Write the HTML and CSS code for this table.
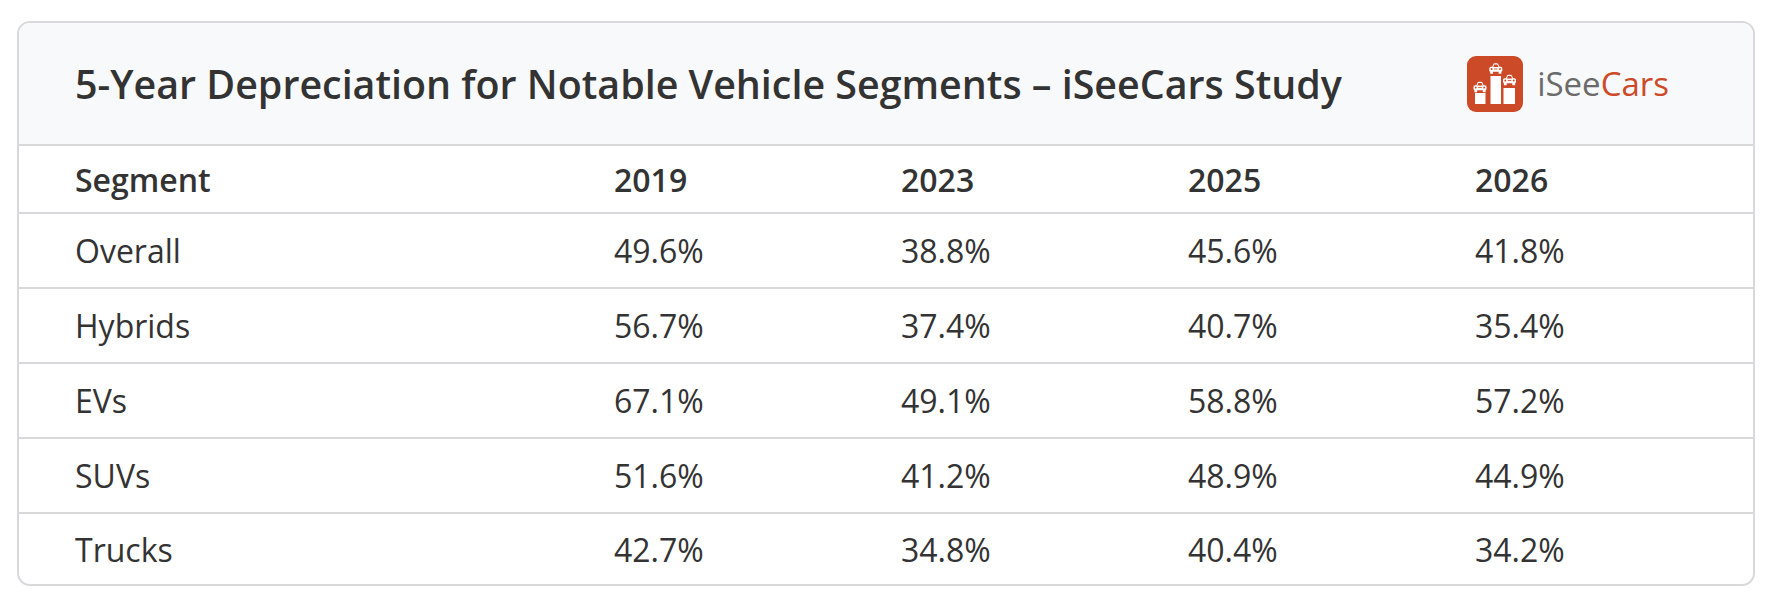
FILE: index.html
```html
<!DOCTYPE html>
<html lang="en">
<head>
<meta charset="utf-8">
<title>5-Year Depreciation – iSeeCars Study</title>
<link rel="stylesheet" href="styles.css">
</head>
<body>
<div class="card">
  <div class="card-header">
    <h1 class="title">5-Year Depreciation for Notable Vehicle Segments – iSeeCars Study</h1>
    <div class="logo">
      <svg class="logo-icon" viewBox="0 0 56 56" width="56" height="56" aria-hidden="true">
        <defs>
          <g id="car">
            <path d="M3.2 4.2 L4.6 1 Q5 0.2 6 0.2 H8 Q9 0.2 9.4 1 L10.8 4.2 Z" fill="#fff"/>
            <rect x="0.5" y="3.8" width="13" height="5" rx="1.6" fill="#fff"/>
            <rect x="1.4" y="8" width="2.8" height="2.8" rx="0.6" fill="#fff"/>
            <rect x="9.8" y="8" width="2.8" height="2.8" rx="0.6" fill="#fff"/>
            <path d="M4.4 3.9 L5.4 1.6 H8.6 L9.6 3.9 Z" fill="#cd4a28"/>
            <circle cx="2.8" cy="6" r="0.95" fill="#cd4a28"/>
            <circle cx="11.2" cy="6" r="0.95" fill="#cd4a28"/>
            <rect x="5.2" y="5.6" width="3.6" height="0.8" fill="#cd4a28"/>
          </g>
        </defs>
        <rect x="0" y="0" width="56" height="56" rx="9" fill="#cd4a28"/>
        <rect x="8" y="37" width="10.5" height="11" fill="#fff"/>
        <rect x="23.5" y="20" width="10.5" height="28" fill="#fff"/>
        <rect x="36.5" y="32" width="11.5" height="16" fill="#fff"/>
        <use href="#car" transform="translate(6 25.5)"/>
        <use href="#car" transform="translate(21.8 7)"/>
        <use href="#car" transform="translate(35.5 18.5)"/>
      </svg>
      <span class="logo-text"><span class="logo-see">iSee</span><span class="logo-cars">Cars</span></span>
    </div>
  </div>
  <table class="data">
    <colgroup>
      <col class="c-seg">
      <col class="c-year">
      <col class="c-year">
      <col class="c-year">
      <col>
    </colgroup>
    <thead>
      <tr><th>Segment</th><th>2019</th><th>2023</th><th>2025</th><th>2026</th></tr>
    </thead>
    <tbody>
      <tr><td>Overall</td><td>49.6%</td><td>38.8%</td><td>45.6%</td><td>41.8%</td></tr>
      <tr><td>Hybrids</td><td>56.7%</td><td>37.4%</td><td>40.7%</td><td>35.4%</td></tr>
      <tr><td>EVs</td><td>67.1%</td><td>49.1%</td><td>58.8%</td><td>57.2%</td></tr>
      <tr><td>SUVs</td><td>51.6%</td><td>41.2%</td><td>48.9%</td><td>44.9%</td></tr>
      <tr><td>Trucks</td><td>42.7%</td><td>34.8%</td><td>40.4%</td><td>34.2%</td></tr>
    </tbody>
  </table>
</div>
</body>
</html>
```
FILE: styles.css
```css
* { box-sizing: border-box; }
html, body { margin: 0; padding: 0; background: #ffffff; }
body {
  padding: 21px 17px 0;
  font-family: "Open Sans", "Liberation Sans", sans-serif;
  color: #333333;
}
.card {
  border: 2px solid #d9d9db;
  border-radius: 13px;
  overflow: hidden;
  background: #ffffff;
}
.card-header {
  display: flex;
  align-items: center;
  justify-content: space-between;
  height: 123px;
  padding: 0 84px 0 56px;
  background: #f8f9fb;
  border-bottom: 2px solid #d9d9db;
}
.title {
  margin: 0;
  font-size: 39.4px;
  font-weight: 600;
  color: #333333;
  letter-spacing: 0;
}
.logo {
  display: flex;
  align-items: center;
  gap: 14px;
}
.logo-icon { display: block; }
.logo-text {
  font-size: 33px;
  font-weight: 400;
  line-height: 1;
}
.logo-see { color: #6b6b6b; }
.logo-cars { color: #cd4a28; }
.data {
  width: 100%;
  border-collapse: collapse;
  table-layout: fixed;
}
.c-seg { width: 539px; }
.c-year { width: 287px; }
.data th, .data td {
  text-align: left;
  padding: 0 0 0 56px;
  font-size: 32px;
  color: #333333;
}
.data th {
  font-weight: 600;
  height: 67px;
  border-bottom: 2px solid #d9d9db;
}
.data td {
  font-weight: 400;
  height: 75px;
  border-bottom: 2px solid #d9d9db;
}
.data tbody tr:last-child td { border-bottom: none; height: 71px; }
```
